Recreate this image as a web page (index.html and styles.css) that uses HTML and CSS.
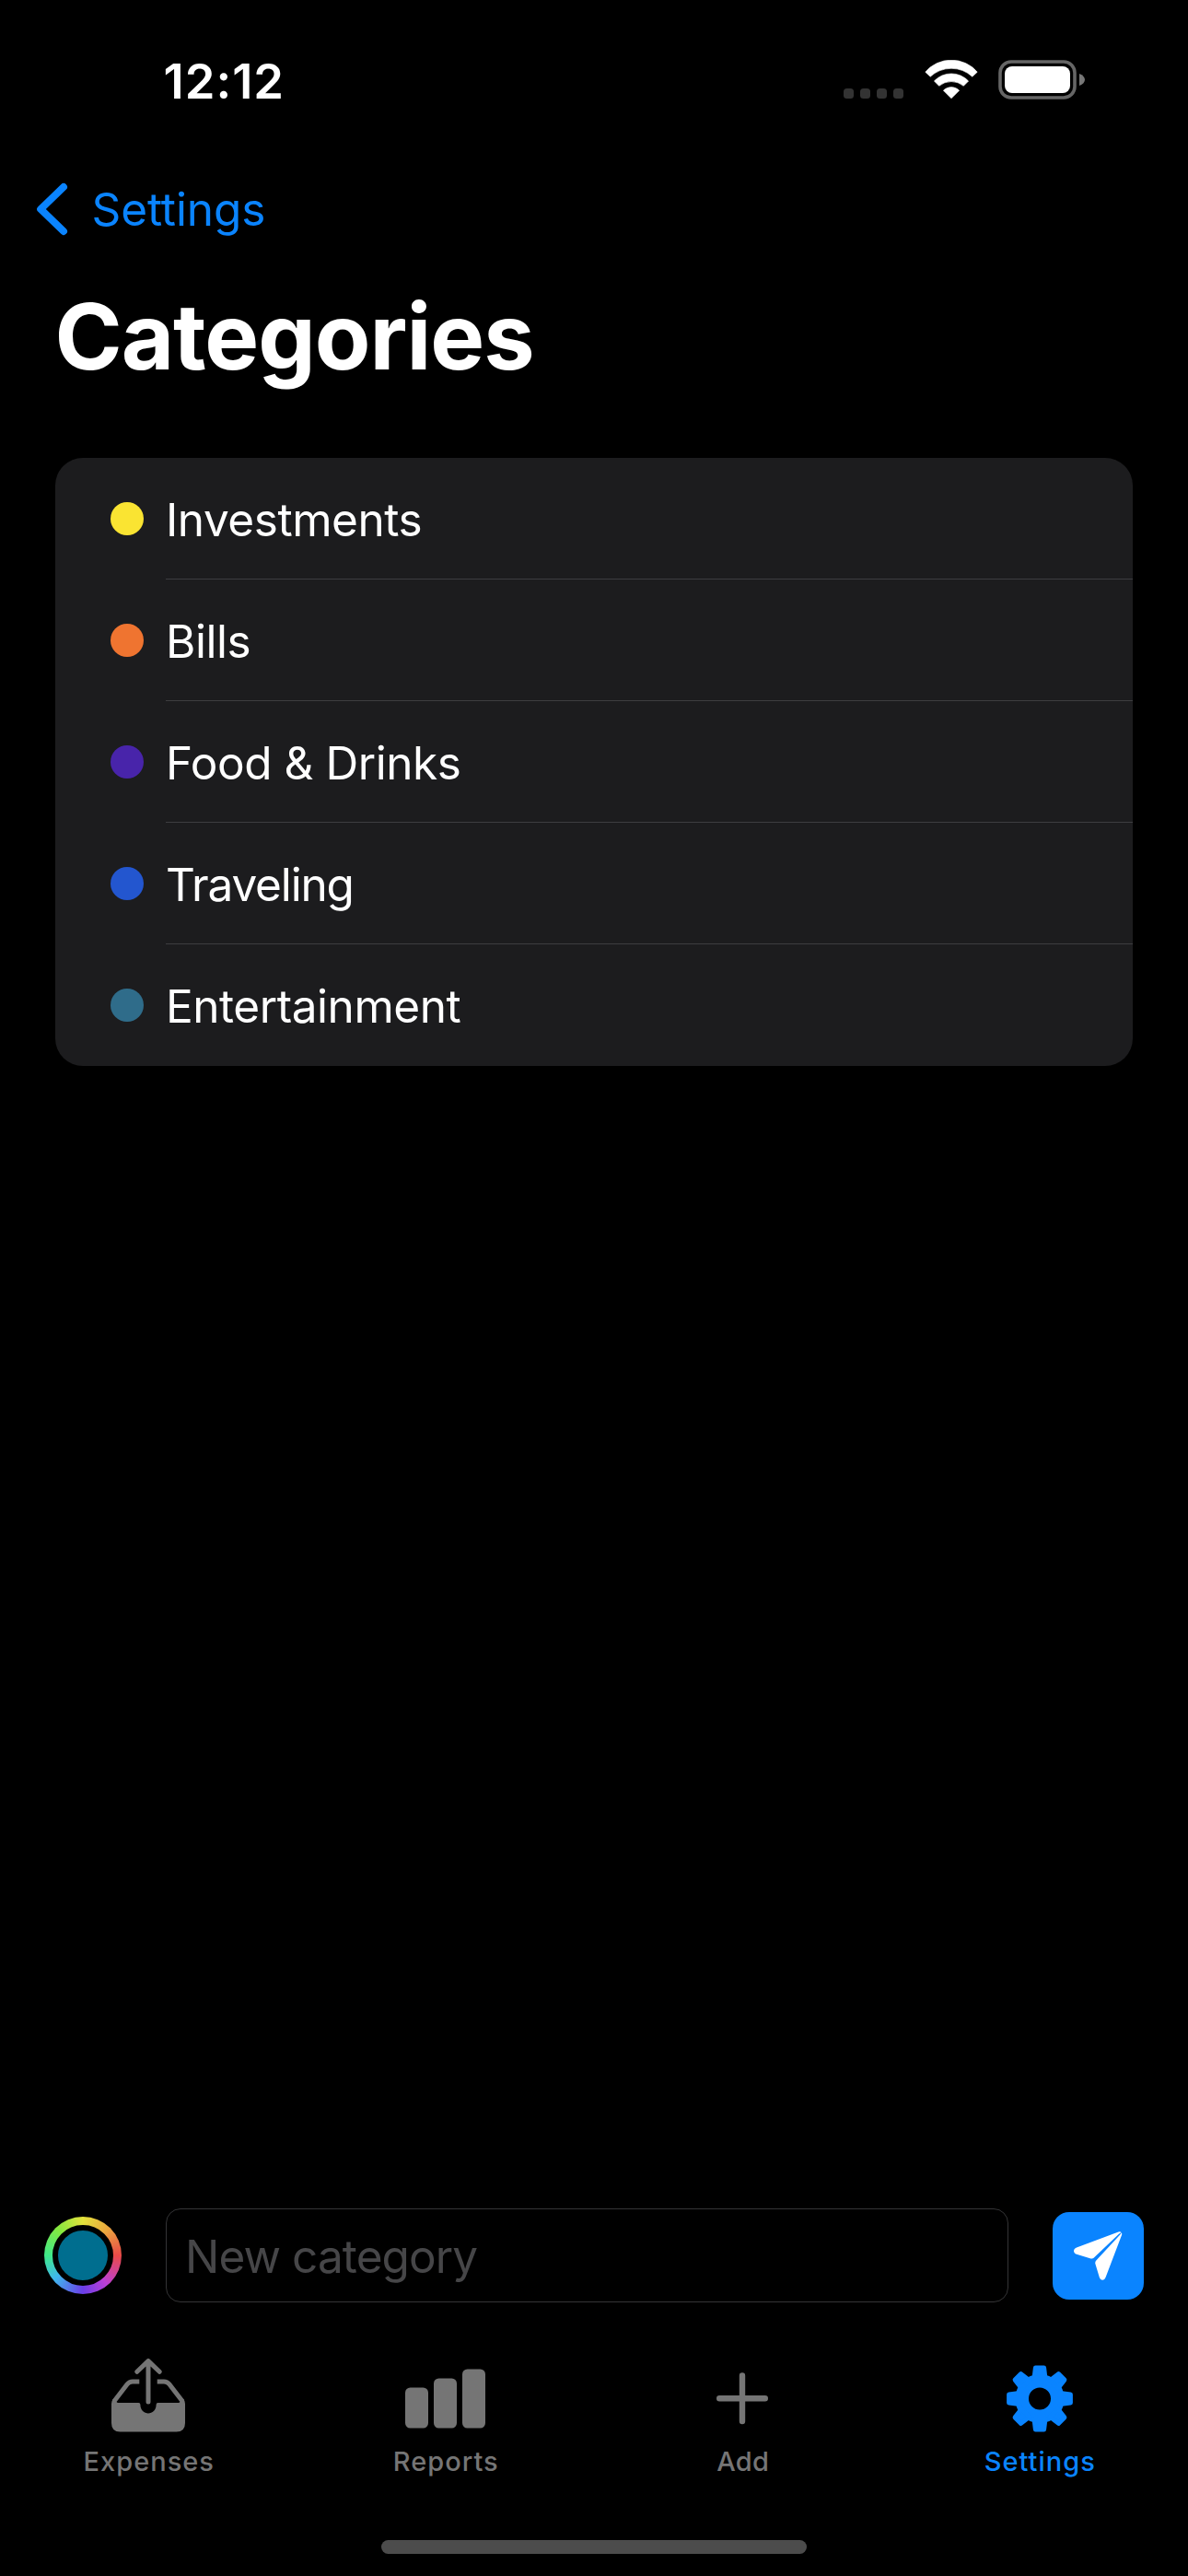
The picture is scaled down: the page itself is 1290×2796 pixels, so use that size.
FILE: index.html
```html
<!DOCTYPE html>
<html lang="en">
<head>
<meta charset="utf-8">
<title>Categories</title>
<link rel="stylesheet" href="styles.css">
</head>
<body>
<header class="status-bar">
  <span class="time">12:12</span>
  <div class="status-icons">
    <div class="signal"><i></i><i></i><i></i><i></i></div>
    <svg class="wifi" width="58" height="42" viewBox="0 0 58 42" fill="#fff" stroke="#fff" stroke-width="0.6" stroke-linejoin="round">
      <path d="M0.8 13.2A37 37 0 0 1 57.2 13.2L51.8 18.2A33.6 33.6 0 0 0 6.2 18.2Z"/>
      <path d="M10.4 23A25.4 25.4 0 0 1 47.6 23L42.3 28.3A21 21 0 0 0 15.7 28.3Z"/>
      <path d="M20.4 33.2A12 12 0 0 1 37.6 33.2L29 41.8Z"/>
    </svg>
    <svg class="battery" width="94" height="43" viewBox="0 0 94 43">
      <rect x="2" y="2" width="81" height="39" rx="12" fill="none" stroke="#666" stroke-width="3.6"/>
      <rect x="7" y="7" width="71" height="29" rx="8" fill="#fff"/>
      <path d="M88 15C92 16.5 94 19 94 21.5S92 26.5 88 28Z" fill="#777"/>
    </svg>
  </div>
</header>
<nav class="nav-bar">
  <svg width="34" height="58" viewBox="0 0 34 58" fill="none" stroke="#0a84ff" stroke-width="8" stroke-linecap="round" stroke-linejoin="round"><path d="M29 5L4.2 29L29 53"/></svg>
  <span>Settings</span>
</nav>
<h1 class="title">Categories</h1>
<ul class="list">
  <li><i class="dot yellow"></i><span>Investments</span></li>
  <li><i class="dot orange"></i><span>Bills</span></li>
  <li><i class="dot purple"></i><span>Food &amp; Drinks</span></li>
  <li><i class="dot blue"></i><span class="tight">Traveling</span></li>
  <li><i class="dot teal"></i><span>Entertainment</span></li>
</ul>
<section class="composer">
  <div class="well"><i></i></div>
  <div class="field">New category</div>
  <div class="send">
    <svg width="53" height="53" viewBox="0 0 53 53" fill="#fff">
      <path d="M3 17.5L48.5 0.5Q50.5 -0.2 51.5 1L49 2.8L21.6 28.8Q20.3 30 18.5 29.4L3 24.8C-1 23.5 -1 19 3 17.5Z"/>
      <path d="M50.3 3.6L51.8 1.2Q52.5 2.2 52 4L34.6 49.8C33.2 53.8 29 53.8 27.8 49.8L23.4 35.3Q22.8 33.2 24.3 31.6Z"/>
    </svg>
  </div>
</section>
<nav class="tabs">
  <div class="tab">
    <svg width="80" height="80" viewBox="0 0 80 80" fill="none" stroke="#757575" stroke-width="5" stroke-linecap="round" stroke-linejoin="round">
      <path d="M27.8 14.3L40 2.6L52.2 14.3M40 3V47"/>
      <path d="M30.3 24.9H23Q19.4 24.9 17.2 27.8L2.8 46.5M49.7 24.9H57Q60.6 24.9 62.8 27.8L77.2 46.5" stroke-linecap="butt"/>
      <path d="M0 49Q0 46 1.6 44.3L6.8 48H29.5Q31.4 48 31.4 50C31.4 62.5 48.6 62.5 48.6 50Q48.6 48 50.5 48H73.2L78.4 44.3Q80 46 80 49V70Q80 79.5 70.5 79.5H9.5Q0 79.5 0 70Z" fill="#757575" stroke="none"/>
    </svg>
    <span>Expenses</span>
  </div>
  <div class="tab">
    <svg width="88" height="80" viewBox="0 0 88 80" fill="#757575">
      <rect x="0" y="31.5" width="25" height="44" rx="5.5"/><rect x="31" y="21.5" width="25" height="54" rx="5.5"/><rect x="62" y="11.5" width="25" height="64" rx="5.5"/>
    </svg>
    <span>Reports</span>
  </div>
  <div class="tab">
    <svg width="80" height="80" viewBox="0 0 80 80" stroke="#757575" stroke-width="6.4" stroke-linecap="round"><path d="M15.2 43.3H64.8M40 18.5V68.1"/></svg>
    <span class="short">Add</span>
  </div>
  <div class="tab active">
    <svg width="80" height="80" viewBox="-40 -43.5 80 80" fill="#0a84ff" stroke="#0a84ff" stroke-width="5" stroke-linejoin="round">
      <defs><path id="tooth" d="M-6 -22L-4.6 -33.4H4.6L6 -22Z"/></defs>
      <circle r="19.3" fill="none" stroke-width="14.6"/>
      <use href="#tooth"/><use href="#tooth" transform="rotate(45)"/><use href="#tooth" transform="rotate(90)"/><use href="#tooth" transform="rotate(135)"/><use href="#tooth" transform="rotate(180)"/><use href="#tooth" transform="rotate(225)"/><use href="#tooth" transform="rotate(270)"/><use href="#tooth" transform="rotate(315)"/>
    </svg>
    <span>Settings</span>
  </div>
</nav>
<div class="home-indicator"></div>
</body>
</html>
```
FILE: styles.css
```css
* { box-sizing: border-box; }
body {
  margin: 0;
  width: 1290px;
  height: 2796px;
  display: flex;
  flex-direction: column;
  overflow: hidden;
  background: #000;
  color: #fff;
  font-family: Inter, "Liberation Sans", sans-serif;
  font-size: 49.5px;
}
svg { display: block; flex: none; }
.status-bar {
  display: flex;
  justify-content: space-between;
  height: 177px;
  padding: 0 112px 0 177.5px;
}
.time { height: 176px; line-height: 176px; font-size: 52.5px; font-weight: 600; letter-spacing: 1px; }
.status-icons { display: flex; padding-top: 65px; align-items: flex-start; }
.signal { display: flex; gap: 7px; padding-top: 31px; margin-right: 22.5px; }
.signal i { width: 11px; height: 11px; border-radius: 3.5px; background: #333; }
.wifi { margin-right: 22.5px; }
.nav-bar {
  display: flex;
  align-items: center;
  gap: 26px;
  height: 100px;
  padding-left: 39.5px;
  color: #0a84ff;
  letter-spacing: -0.1px;
}
.title {
  margin: 0;
  height: 220px;
  line-height: 176px;
  padding-left: 59.5px;
  font-size: 99px;
  font-weight: 700;
  letter-spacing: -1.05px;
}
.list {
  list-style: none;
  margin: 0 60px;
  padding: 0;
  border-radius: 30px;
  background: #1c1c1e;
}
.list li { display: flex; align-items: center; height: 132px; padding-left: 60px; }
.list span {
  flex: 1;
  height: 132px;
  line-height: 133px;
  padding-top: 1px;
  letter-spacing: -0.45px;
}
.list .tight { letter-spacing: -1.15px; }
.list li:not(:last-child) span { border-bottom: 1px solid #3d3d40; }
.dot { width: 36px; height: 36px; margin-right: 24px; border-radius: 50%; }
.yellow { background: #fae432; }
.orange { background: #ef7430; }
.purple { background: #4824aa; }
.blue { background: #2356cf; }
.teal { background: #2f6c8a; }
.composer {
  display: flex;
  align-items: center;
  height: 102px;
  margin-top: auto;
  padding: 0 48px;
}
.well {
  width: 84px;
  height: 84px;
  padding: 9px;
  border-radius: 50%;
  background: conic-gradient(#e4e23c, #eaa63e 12%, #ea4a48 25%, #bb3fd6 39%, #6a3ee8 50%, #3fb8ee 64%, #3fe989 75%, #84e83f 88%, #e4e23c);
}
.well i { display: block; width: 66px; height: 66px; border: 6px solid #000; border-radius: 50%; background: #006e8f; }
.field {
  display: flex;
  align-items: center;
  width: 915px;
  height: 102px;
  margin: 0 48px;
  padding: 2px 0 0 20px;
  border: 1px solid #343436;
  border-radius: 16px;
  color: #464648;
  letter-spacing: -0.9px;
}
.send {
  display: flex;
  align-items: center;
  justify-content: center;
  width: 99px;
  height: 95px;
  border-radius: 18px;
  background: #0a84ff;
}
.tabs { display: flex; height: 198px; padding-top: 60.5px; }
.tab {
  flex: 1;
  display: flex;
  flex-direction: column;
  align-items: center;
  color: #757575;
  font-size: 29px;
  font-weight: 500;
  line-height: 36px;
  letter-spacing: 1px;
}
.tab span { margin: 14px -1px 0 0; }
.tab .short { letter-spacing: 0.3px; }
.active { color: #0a84ff; }
.home-indicator { flex: none; width: 462px; height: 15px; margin: 60px auto 24px; border-radius: 8px; background: #4c4c4c; }
```
